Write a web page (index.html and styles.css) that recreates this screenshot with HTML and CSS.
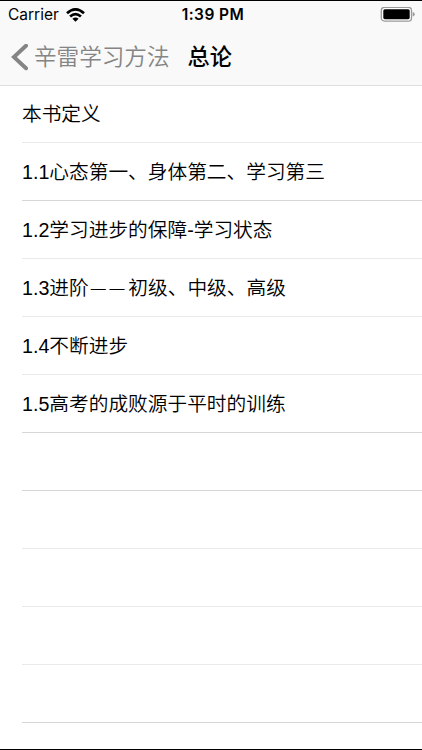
FILE: index.html
```
<!DOCTYPE html>
<html lang="zh-CN">
<head>
  <meta charset="UTF-8">
  <title>总论</title>
  <meta name="viewport" content="width=device-width, initial-scale=1.0">
  <link rel="stylesheet" href="styles.css">
</head>
<body>
  <header>
    <div class="status-bar">
      <div class="carrier">
        <span>Carrier</span>
        <svg class="wifi" width="19" height="14" viewBox="0 0 19 14">
          <g fill="none" stroke="#000" stroke-width="2.7">
            <path d="M1 5.2Q9.5 -2.4 18 5.2"/>
            <path d="M4.1 8.6Q9.5 3.8 14.9 8.6"/>
          </g>
          <path d="M6.4 10.8Q9.5 8.2 12.6 10.8L9.5 13.8Z"/>
        </svg>
      </div>
      <div class="time">1:39 PM</div>
      <svg class="battery" width="35" height="16" viewBox="0 0 35 16">
        <rect x="1.3" y="0.3" width="30.2" height="13.8" rx="3.2" fill="#fff" stroke="#999" stroke-width="1.3"/>
        <rect x="3.3" y="2.2" width="26.4" height="10" rx="1.6"/>
        <path d="M32.7 4.9Q34.7 5.4 34.7 7.2Q34.7 9 32.7 9.5Z" fill="#999"/>
      </svg>
    </div>
    <nav class="nav-bar">
      <a class="back" href="#">
        <svg width="17" height="28" viewBox="0 0 17 28">
          <path d="M15 1.7L2.9 13L15 24.3" fill="none" stroke="#858585" stroke-width="3.9" stroke-linecap="round"/>
        </svg>
        <span>辛雷学习方法</span>
      </a>
      <h1>总论</h1>
    </nav>
  </header>
  <ul class="list">
    <li>本书定义</li>
    <li class="dark">1.1心态第一、身体第二、学习第三</li>
    <li>1.2学习进步的保障-学习状态</li>
    <li>1.3进阶<span class="dash">——</span>初级、中级、高级</li>
    <li>1.4不断进步</li>
    <li class="dark">1.5高考的成败源于平时的训练</li>
    <li class="dark"></li>
    <li></li>
    <li></li>
    <li></li>
    <li class="dark"></li>
  </ul>
</body>
</html>
```
FILE: styles.css
```
* {
  box-sizing: border-box;
}

body {
  margin: 0;
  height: 750px;
  overflow: hidden;
  border-top: 1px solid #000;
  border-bottom: 1px solid #000;
  background: #fff;
  color: #000;
  font-family: "Liberation Sans", "Noto Sans CJK SC", sans-serif;
}

header {
  height: 85px;
  background: #f9f9f9;
  border-bottom: 1px solid #dedede;
}

.status-bar {
  display: grid;
  grid-template-columns: 1fr auto 1fr;
  align-items: center;
  height: 27px;
  padding: 0 7px 0 8px;
}

.carrier {
  display: flex;
  align-items: center;
  gap: 7px;
  font-family: Inter, sans-serif;
  font-size: 15.5px;
}

.time {
  padding-left: 3px;
  font-family: Inter, sans-serif;
  font-size: 15.5px;
  font-weight: 600;
  letter-spacing: 0.45px;
}

.battery {
  justify-self: end;
}

.nav-bar {
  display: flex;
  align-items: center;
  height: 60px;
  padding-left: 11px;
}

.back {
  display: flex;
  align-items: center;
  gap: 6px;
  color: #858585;
  font-size: 22.6px;
  font-weight: 350;
  line-height: 28px;
  text-decoration: none;
}

h1 {
  margin: 0 0 0 18px;
  font-size: 22.2px;
  font-weight: 500;
  line-height: 28px;
}

.list {
  margin: 0;
  padding: 0 0 0 22px;
  list-style: none;
}

.list li {
  display: flex;
  align-items: center;
  height: 58px;
  padding-bottom: 2px;
  border-bottom: 1px solid #e9e9e9;
  font-size: 19.7px;
  font-weight: 350;
  white-space: nowrap;
}

.list li:first-child {
  height: 57px;
  padding-bottom: 3px;
}

.list .dark {
  border-bottom-color: #d6d6d6;
}

.dash {
  padding: 2px 0 0 2px;
  font-size: 15px;
  letter-spacing: 3.8px;
}
```
